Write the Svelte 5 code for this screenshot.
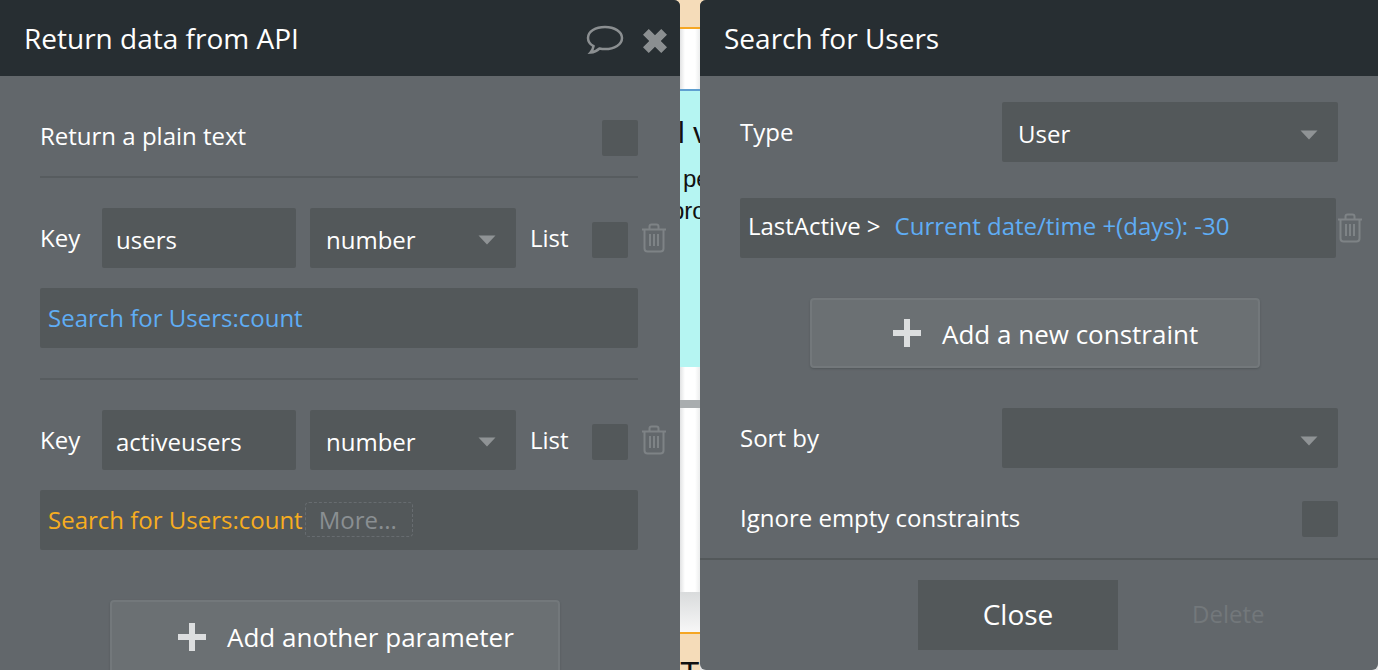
<script lang="ts">
  const params = [
    { key: "users", expr: "Search for Users:count", tone: "blue", more: false },
    { key: "activeusers", expr: "Search for Users:count", tone: "amber", more: true }
  ];
</script>

{#snippet trash()}
  <svg class="trash" width="26" height="30" viewBox="0 0 26 30" fill="none" stroke="currentColor" stroke-width="2">
    <path d="M1 6.500h24" />
    <path d="M8.500 6V3.500q0-2 2-2h5q2 0 2 2V6" />
    <path d="M3.500 7v18.500q0 3 3 3h13q3 0 3-3V7" />
    <path d="M9 11v12M13 11v12M17 11v12" />
  </svg>
{/snippet}

{#snippet caret()}
  <svg class="caret" width="18" height="10" viewBox="0 0 18 10"><path d="M0.500 0.500h17L9 9.500z" fill="currentColor" /></svg>
{/snippet}

{#snippet plus()}
  <svg class="plus" width="30" height="30" viewBox="0 0 30 30"><path d="M12 1h6v11h11v6H18v11h-6V18H1v-6h11z" fill="currentColor" /></svg>
{/snippet}

<div class="screen">
  <section class="panel left">
    <header class="head">
      <h2>Return data from API</h2>
      <div class="head-tools">
        <svg class="bubble" width="38" height="32" viewBox="0 0 38 32" fill="none" stroke="currentColor" stroke-width="2.500">
          <path d="M19 2C9.500 2 2 6.500 2 13c0 3.500 2 6.300 5.500 8.200-.4 2.500-1.700 4.800-3 6.300 3.500-.3 6.500-1.700 9-4 1.800.4 3.600.6 5.500.6 9.500 0 17-4.700 17-11.100S28.500 2 19 2z" />
        </svg>
        <svg class="close-x" width="24" height="24" viewBox="1.500 1.500 23 23"><path d="M7 1.500 13 7.500l6-6 5.500 5.500-6 6 6 6-5.500 5.500-6-6-6 6L1.500 19l6-6-6-6z" fill="currentColor" /></svg>
      </div>
    </header>

    <div class="left-body">
      <div class="plain-row">
        <span class="label">Return a plain text</span>
        <span class="check"></span>
      </div>

      {#each params as p}
        <div class="param">
          <div class="key-row">
            <span class="label key-label">Key</span>
            <div class="field key-input">{p.key}</div>
            <div class="field key-type">number {@render caret()}</div>
            <span class="label list-label">List</span>
            <span class="check"></span>
            {@render trash()}
          </div>
          <div class="field expr">
            <span class={p.tone}>{p.expr}</span>
            {#if p.more}<span class="more">More...</span>{/if}
          </div>
        </div>
      {/each}

      <button class="add add-param">{@render plus()} Add another parameter</button>
    </div>
  </section>

  <div class="canvas-strip" aria-hidden="true">
    <div class="band tan top"></div>
    <div class="band white upper"></div>
    <div class="band cyan">
      <span class="bit big">l v</span>
      <span class="bit small one">pe</span>
      <span class="bit small two">pro</span>
    </div>
    <div class="band white lower"></div>
    <div class="band tan bottom"><span class="bit tee">T</span></div>
  </div>

  <section class="panel right">
    <header class="head">
      <h2>Search for Users</h2>
    </header>

    <div class="right-body">
      <div class="form-row">
        <span class="label">Type</span>
        <div class="field select">User {@render caret()}</div>
      </div>

      <div class="constraint-row">
        <div class="field constraint">
          <span class="name">LastActive &gt;</span>
          <span class="blue">Current date/time +(days): -30</span>
        </div>
        {@render trash()}
      </div>

      <button class="add add-constraint">{@render plus()} Add a new constraint</button>

      <div class="form-row sort">
        <span class="label">Sort by</span>
        <div class="field select">{@render caret()}</div>
      </div>

      <div class="ignore-row">
        <span class="label">Ignore empty constraints</span>
        <span class="check"></span>
      </div>
    </div>

    <footer class="foot">
      <button class="close">Close</button>
      <span class="delete">Delete</span>
    </footer>
  </section>
</div>

<style>
  :global(body) {
    margin: 0;
    background: #62676b;
    font-family: "Open Sans", "Liberation Sans", sans-serif;
    overflow: hidden;
  }

  .screen {
    display: flex;
    width: 1378px;
    height: 670px;
    overflow: hidden;
    background: linear-gradient(#f5dcb9 50%, #e4e5e6 50%);
  }

  .panel {
    display: flex;
    flex-direction: column;
    height: 670px;
    background: #62676b;
    color: #fff;
    box-sizing: border-box;
    overflow: hidden;
  }

  .left {
    flex: none;
    width: 680px;
    border-top-right-radius: 6px;
  }

  .right {
    flex: none;
    width: 678px;
    border-radius: 6px 0 6px 6px;
  }

  .head {
    flex: none;
    height: 76px;
    display: flex;
    align-items: center;
    justify-content: space-between;
    padding: 0 13px 0 24px;
    background: #272e32;
  }

  .head h2 {
    margin: 0;
    font-size: 28px;
    font-weight: 400;
    line-height: 1;
    color: #fff;
  }

  .head-tools {
    display: flex;
    align-items: center;
    gap: 19px;
    margin-top: 6px;
    color: #8b8f91;
  }

  .left-body {
    padding: 44px 42px 0 40px;
    display: flex;
    flex-direction: column;
  }

  .label {
    font-size: 24px;
    line-height: 32px;
    color: #fff;
  }

  .check {
    flex: none;
    width: 36px;
    height: 36px;
    border-radius: 2px;
    background: #53585a;
  }

  .plain-row {
    display: flex;
    align-items: center;
    justify-content: space-between;
    height: 36px;
    padding-bottom: 20px;
    border-bottom: 2px solid #575c5f;
  }

  .plain-row .label {
    margin-top: -4px;
  }

  .param {
    padding-top: 30px;
    padding-bottom: 30px;
    border-bottom: 2px solid #575c5f;
  }

  .param:last-of-type {
    border-bottom: 0;
    padding-bottom: 50px;
  }

  .key-row {
    display: flex;
    align-items: center;
    height: 60px;
  }

  .key-row .check {
    margin-top: 4px;
  }

  .key-label {
    flex: none;
    width: 62px;
  }

  .field {
    flex: none;
    box-sizing: border-box;
    height: 60px;
    display: flex;
    align-items: center;
    border-radius: 2px;
    background: #53585a;
    font-size: 24px;
    color: #fff;
  }

  .key-input {
    width: 194px;
    padding-left: 14px;
    padding-top: 2px;
  }

  .key-type {
    position: relative;
    width: 206px;
    margin-left: 14px;
    padding-left: 16px;
    padding-top: 2px;
  }

  .caret {
    position: absolute;
    right: 20px;
    top: 27px;
    color: #8f9395;
  }

  .list-label {
    flex: none;
    margin-left: 14px;
    width: 62px;
  }

  .trash {
    flex: none;
    margin-left: 13px;
    color: #7e8386;
  }

  .expr {
    margin-top: 20px;
    padding-left: 8px;
    padding-bottom: 2px;
  }

  .blue {
    color: #5fadf5;
  }

  .amber {
    color: #f7ad1f;
  }

  .more {
    box-sizing: border-box;
    height: 35px;
    display: flex;
    align-items: center;
    padding: 0 15px 0 13px;
    margin-left: 2px;
    border: 1px dashed #676c70;
    border-radius: 4px;
    color: #8a8f92;
  }

  .add {
    display: flex;
    align-items: center;
    box-sizing: border-box;
    margin: 0;
    font: inherit;
    font-size: 26px;
    color: #fff;
    background: #6b7073;
    border: 2px solid #73787b;
    border-radius: 4px;
    box-shadow: 0 1px 2px rgba(60, 64, 67, 0.4);
  }

  .plus {
    flex: none;
    color: #dcdedf;
  }

  .add-param {
    width: 450px;
    height: 74px;
    margin-left: 70px;
    padding-left: 65px;
    gap: 20px;
  }

  .canvas-strip {
    position: relative;
    flex: none;
    width: 20px;
    height: 670px;
    display: flex;
    flex-direction: column;
    overflow: hidden;
  }

  .band {
    position: relative;
    flex: none;
    box-sizing: border-box;
  }

  .tan {
    background: #f5dcb9;
  }

  .top {
    height: 29px;
    border-bottom: 2px solid #f5a623;
  }

  .upper {
    height: 62px;
    border-bottom: 2px solid #5f9fd0;
    background: linear-gradient(90deg, #e2e3e4, #fff 25%, #fff 75%, #eceded);
  }

  .cyan {
    height: 276px;
    background: #b5f5f2;
  }

  .lower {
    height: 265px;
    background:
      linear-gradient(#a9adaf, #a9adaf) 0 33px / 100% 8px no-repeat,
      linear-gradient(#d9dbdc, #f7f7f7) 0 225px / 100% 40px no-repeat,
      linear-gradient(90deg, #e2e3e4, #fff 25%, #fff 75%, #eceded);
  }

  .bottom {
    flex: 1;
    border-top: 2px solid #f5a623;
  }

  .bit {
    position: absolute;
    font-family: "Liberation Sans", Arial, sans-serif;
    color: #111;
    white-space: nowrap;
    line-height: 1;
  }

  .big {
    left: -2px;
    top: 27px;
    font-size: 30px;
  }

  .small {
    font-size: 24px;
  }

  .one {
    left: 3px;
    top: 76px;
  }

  .two {
    left: -9px;
    top: 108px;
  }

  .tee {
    left: 0;
    top: 23px;
    font-size: 32px;
  }

  .right-body {
    flex: 1;
    display: flex;
    flex-direction: column;
    padding: 26px 40px 0 40px;
  }

  .form-row {
    display: flex;
    align-items: center;
    justify-content: space-between;
    height: 60px;
  }

  .form-row .label {
    margin-top: 0;
  }

  .select {
    position: relative;
    width: 336px;
    padding-left: 16px;
    padding-top: 3px;
  }

  .select .caret {
    top: 28px;
  }

  .constraint-row {
    display: flex;
    align-items: center;
    margin-top: 36px;
  }

  .constraint {
    width: 596px;
    padding-left: 8px;
    padding-bottom: 5px;
    gap: 14px;
  }

  .constraint-row .trash {
    margin-left: 1px;
  }

  .add-constraint {
    width: 450px;
    height: 70px;
    margin: 40px 0 0 70px;
    padding: 2px 0 0 80px;
    gap: 20px;
  }

  .add-constraint .plus {
    margin-top: -2px;
  }

  .sort {
    margin-top: 40px;
  }

  .ignore-row {
    display: flex;
    align-items: center;
    justify-content: space-between;
    margin-top: 33px;
    height: 36px;
  }

  .ignore-row .label {
    margin-top: -2px;
  }

  .foot {
    flex: none;
    height: 112px;
    box-sizing: border-box;
    display: flex;
    border-top: 2px solid #53585a;
    padding: 20px 0 0 218px;
  }

  .close {
    width: 200px;
    height: 70px;
    margin: 0;
    padding: 0 0 2px;
    font: inherit;
    font-size: 28px;
    color: #fff;
    background: #53585a;
    border: 0;
  }

  .delete {
    margin: 19px 0 0 74px;
    font-size: 24px;
    line-height: 30px;
    color: #73787b;
  }
</style>
